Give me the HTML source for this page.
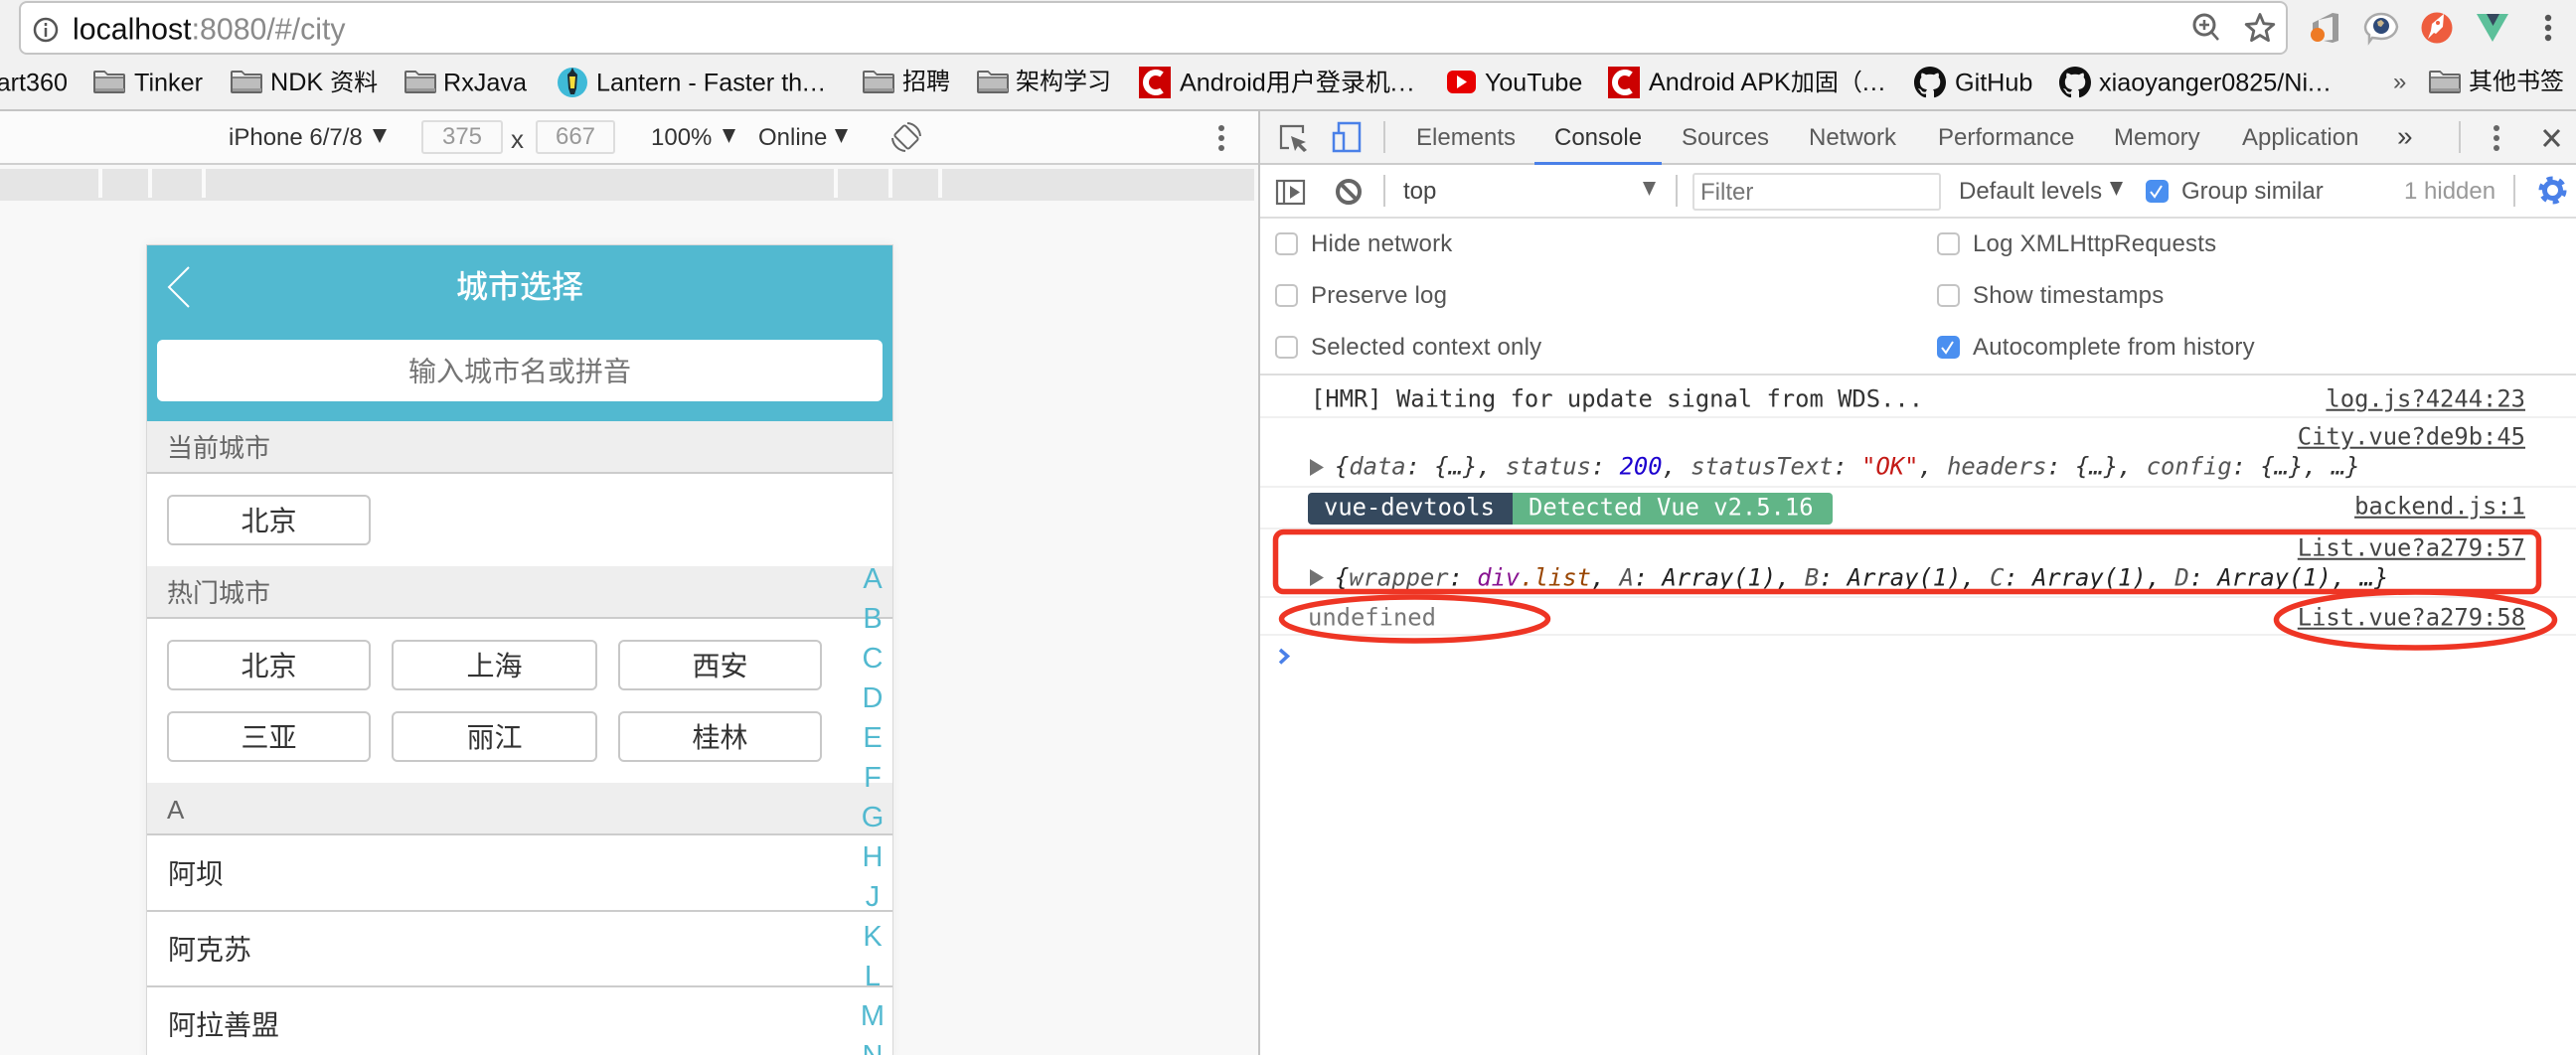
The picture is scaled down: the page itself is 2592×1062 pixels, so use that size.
<!DOCTYPE html>
<html><head><meta charset="utf-8"><style>
html,body{margin:0;padding:0;width:2592px;height:1062px;overflow:hidden;background:#fff}
body{position:relative;font-family:"Liberation Sans","Noto Sans CJK SC",sans-serif;font-size:24px;color:#333}
.t{position:absolute;white-space:nowrap;transform:translateY(calc(-50% + 1.5px));line-height:1.2}
.c{transform:translate(-50%,calc(-50% + 1.5px));text-align:center}
.b{position:absolute}
.m{font-family:"DejaVu Sans Mono","Liberation Mono",monospace;font-size:23.8px;transform:translateY(-50%)}
.lnk{text-decoration:underline;color:#444}
.tab{color:#5a5a5a}
.bm{font-size:25.2px;color:#111}
.z{font-size:24px}
.btn{position:absolute;height:51px;box-sizing:border-box;background:#fff;border:2px solid #c8c8c8;border-radius:6px;font-size:28px;line-height:49px;text-align:center;color:#333}
.sec{position:absolute;left:148px;width:750px;height:53px;box-sizing:border-box;background:#eee;border-bottom:2px solid #ccc;color:#666;font-size:26px;line-height:54px;padding-left:20px}
.row{position:absolute;left:148px;width:750px;height:2px;background:#ccc}
.idx{position:absolute;left:858px;width:40px;text-align:center;color:#52b9d0;font-size:29px;line-height:34px}
.cb{position:absolute;width:23px;height:23px;box-sizing:border-box;border:2px solid #c4c4c4;border-radius:5px;background:#fff}
.on{background:#4a8ff0;border-color:#4a8ff0}
.op{color:#555;letter-spacing:.2px}
</style></head><body>
<!-- chrome -->
<div class="b" style="left:0;top:0;width:2592px;height:112px;background:#f1f1f1;border-bottom:2px solid #c4c4c4;box-sizing:border-box"></div>
<div class="b" style="left:19px;top:1px;width:2283px;height:54px;background:#fff;border:2px solid #c4c4c4;border-radius:8px;box-sizing:border-box"></div>
<div class="t" style="left:73px;top:29px;font-size:30.3px;color:#111">localhost<span style="color:#8a8a8a">:8080/#/city</span></div>
<!-- bookmarks -->
<div class="t bm" style="right:2524px;top:82px">art360</div>
<div class="t bm" style="left:135px;top:82px">Tinker</div>
<div class="t bm" style="left:272px;top:82px">NDK <span class="z">资料</span></div>
<div class="t bm" style="left:446px;top:82px">RxJava</div>
<div class="t bm" style="left:600px;top:82px">Lantern - Faster th<span style="letter-spacing:1px">...</span></div>
<div class="t bm z" style="left:908px;top:82px">招聘</div>
<div class="t bm z" style="left:1022px;top:82px">架构学习</div>
<div class="t bm" style="left:1187px;top:82px">Android<span style="font-size:25px">用户登录机</span><span style="letter-spacing:1.5px">...</span></div>
<div class="t bm" style="left:1494px;top:82px;font-size:25px">YouTube</div>
<div class="t bm" style="left:1659px;top:82px">Android APK<span class="z">加固（</span><span style="letter-spacing:1px">...</span></div>
<div class="t bm" style="left:1967px;top:82px">GitHub</div>
<div class="t bm" style="left:2112px;top:82px">xiaoyanger0825/Ni<span style="letter-spacing:1px">...</span></div>
<div class="t" style="left:2408px;top:82px;color:#555">»</div>
<div class="t bm z" style="left:2484px;top:82px">其他书签</div>
<!-- device toolbar -->
<div class="b" style="left:0;top:112px;width:1266px;height:54px;background:#fbfbfb;border-bottom:2px solid #d0d0d0;box-sizing:border-box"></div>
<div class="b" style="left:0;top:166px;width:1266px;height:896px;background:#f8f8f8"></div>
<div class="b" style="left:0;top:170px;width:1262px;height:32px;background:#e5e5e5"></div>
<div class="b" style="left:99px;top:170px;width:4px;height:29px;background:#fafafa"></div>
<div class="b" style="left:149px;top:170px;width:4px;height:29px;background:#fafafa"></div>
<div class="b" style="left:203px;top:170px;width:4px;height:29px;background:#fafafa"></div>
<div class="b" style="left:839px;top:170px;width:4px;height:29px;background:#fafafa"></div>
<div class="b" style="left:894px;top:170px;width:4px;height:29px;background:#fafafa"></div>
<div class="b" style="left:944px;top:170px;width:4px;height:29px;background:#fafafa"></div>
<div class="t" style="left:230px;top:138px;color:#333">iPhone 6/7/8</div>
<div class="b" style="left:424px;top:121px;width:82px;height:34px;box-sizing:border-box;border:2px solid #ddd;background:#fafafa;border-radius:3px;text-align:center;line-height:30px;color:#999">375</div>
<div class="t" style="left:514px;top:139px;color:#444;font-size:26px">x</div>
<div class="b" style="left:539px;top:121px;width:80px;height:34px;box-sizing:border-box;border:2px solid #ddd;background:#fafafa;border-radius:3px;text-align:center;line-height:30px;color:#999">667</div>
<div class="t" style="left:655px;top:138px">100%</div>
<div class="t" style="left:763px;top:138px">Online</div>
<!-- frame -->
<div class="b" style="left:147px;top:246px;width:752px;height:820px;background:#fff;box-sizing:border-box;border:1px solid #d8d8d8;box-shadow:0 0 10px rgba(0,0,0,.05)"></div>
<div class="b" style="left:148px;top:247px;width:750px;height:177px;background:#52b9d0"></div>
<div class="t c" style="left:523px;top:287px;color:#fff;font-size:32px;font-weight:500">城市选择</div>
<div class="b" style="left:158px;top:342px;width:730px;height:62px;background:#fff;border-radius:6px"></div>
<div class="t c" style="left:523px;top:373px;color:#757575;font-size:28px">输入城市名或拼音</div>
<div class="sec" style="top:424px">当前城市</div>
<div class="btn" style="left:168px;top:498px;width:205px">北京</div>
<div class="sec" style="top:570px">热门城市</div>
<div class="btn" style="left:168px;top:644px;width:205px">北京</div>
<div class="btn" style="left:394px;top:644px;width:207px">上海</div>
<div class="btn" style="left:622px;top:644px;width:205px">西安</div>
<div class="btn" style="left:168px;top:716px;width:205px">三亚</div>
<div class="btn" style="left:394px;top:716px;width:207px">丽江</div>
<div class="btn" style="left:622px;top:716px;width:205px">桂林</div>
<div class="sec" style="top:788px">A</div>
<div class="t" style="left:169px;top:879px;font-size:28px">阿坝</div>
<div class="row" style="top:916px"></div>
<div class="t" style="left:169px;top:955px;font-size:28px">阿克苏</div>
<div class="row" style="top:992px"></div>
<div class="t" style="left:169px;top:1031px;font-size:28px">阿拉善盟</div>
<div class="idx" style="top:566px">A</div><div class="idx" style="top:606px">B</div><div class="idx" style="top:646px">C</div><div class="idx" style="top:686px">D</div><div class="idx" style="top:726px">E</div><div class="idx" style="top:766px">F</div><div class="idx" style="top:806px">G</div><div class="idx" style="top:846px">H</div><div class="idx" style="top:886px">J</div><div class="idx" style="top:926px">K</div><div class="idx" style="top:966px">L</div><div class="idx" style="top:1006px">M</div><div class="idx" style="top:1046px">N</div>
<!-- devtools -->
<div class="b" style="left:1266px;top:112px;width:2px;height:950px;background:#c4c4c4"></div>
<div class="b" style="left:1268px;top:112px;width:1324px;height:54px;background:#f3f3f3;border-bottom:2px solid #ccc;box-sizing:border-box"></div>
<div class="b" style="left:1544px;top:163px;width:128px;height:3px;background:#4a80e8"></div>
<div class="t tab" style="left:1425px;top:138px">Elements</div>
<div class="t" style="left:1564px;top:138px;color:#333">Console</div>
<div class="t tab" style="left:1692px;top:138px">Sources</div>
<div class="t tab" style="left:1820px;top:138px">Network</div>
<div class="t tab" style="left:1950px;top:138px">Performance</div>
<div class="t tab" style="left:2127px;top:138px">Memory</div>
<div class="t tab" style="left:2256px;top:138px">Application</div>
<div class="t tab" style="left:2412px;top:136px;font-size:28px;color:#444">»</div>
<div class="b" style="left:1268px;top:218px;width:1324px;height:2px;background:#ddd"></div>
<div class="t" style="left:1412px;top:192px;color:#444">top</div>
<div class="b" style="left:1703px;top:174px;width:250px;height:38px;box-sizing:border-box;border:2px solid #ddd;border-radius:3px;background:#fff"></div>
<div class="t" style="left:1711px;top:193px;color:#777">Filter</div>
<div class="t" style="left:1971px;top:192px;color:#555">Default levels</div>
<div class="cb on" style="left:2159px;top:181px"></div>
<div class="t" style="left:2195px;top:192px;color:#555">Group similar</div>
<div class="t" style="left:2419px;top:192px;color:#999">1 hidden</div>
<!-- options -->
<div class="cb" style="left:1283px;top:234px"></div><div class="t op" style="left:1319px;top:245px">Hide network</div>
<div class="cb" style="left:1283px;top:286px"></div><div class="t op" style="left:1319px;top:297px">Preserve log</div>
<div class="cb" style="left:1283px;top:338px"></div><div class="t op" style="left:1319px;top:349px">Selected context only</div>
<div class="cb" style="left:1949px;top:234px"></div><div class="t op" style="left:1985px;top:245px">Log XMLHttpRequests</div>
<div class="cb" style="left:1949px;top:286px"></div><div class="t op" style="left:1985px;top:297px">Show timestamps</div>
<div class="cb on" style="left:1949px;top:338px"></div><div class="t op" style="left:1985px;top:349px">Autocomplete from history</div>
<div class="b" style="left:1268px;top:376px;width:1324px;height:2px;background:#ddd"></div>
<!-- console -->
<div class="b" style="left:1268px;top:419px;width:1324px;height:2px;background:#f0f0f0"></div>
<div class="b" style="left:1268px;top:489px;width:1324px;height:2px;background:#f0f0f0"></div>
<div class="b" style="left:1268px;top:531px;width:1324px;height:2px;background:#f0f0f0"></div>
<div class="b" style="left:1268px;top:600px;width:1324px;height:2px;background:#f0f0f0"></div>
<div class="b" style="left:1268px;top:638px;width:1324px;height:2px;background:#f0f0f0"></div>
<div class="t m" style="left:1319px;top:402px;color:#333">[HMR] Waiting for update signal from WDS...</div>
<div class="t m lnk" style="right:51px;top:402px">log.js?4244:23</div>
<div class="t m lnk" style="right:51px;top:440px">City.vue?de9b:45</div>
<div class="t m" style="left:1343px;top:470px;font-style:italic;color:#333">{<span style="color:#565656">data</span>: {…}, <span style="color:#565656">status</span>: <span style="color:#1c00cf">200</span>, <span style="color:#565656">statusText</span>: <span style="color:#c41a16">"OK"</span>, <span style="color:#565656">headers</span>: {…}, <span style="color:#565656">config</span>: {…}, …}</div>
<div class="b" style="left:1316px;top:496px;width:206px;height:32px;background:#35495e;border-radius:4px 0 0 4px"></div>
<div class="b" style="left:1522px;top:496px;width:322px;height:32px;background:#61b587;border-radius:0 4px 4px 0"></div>
<div class="t m" style="left:1332px;top:511px;color:#fff">vue-devtools</div>
<div class="t m" style="left:1538px;top:511px;color:#fff">Detected Vue v2.5.16</div>
<div class="t m lnk" style="right:51px;top:510px">backend.js:1</div>
<div class="t m lnk" style="right:51px;top:552px">List.vue?a279:57</div>
<div class="t m" style="left:1343px;top:582px;font-style:italic;color:#222">{<span style="color:#565656">wrapper</span>: <span style="color:#881391">div</span><span style="color:#994500">.list</span>, <span style="color:#565656">A</span>: Array(1), <span style="color:#565656">B</span>: Array(1), <span style="color:#565656">C</span>: Array(1), <span style="color:#565656">D</span>: Array(1), …}</div>
<div class="t m" style="left:1316px;top:622px;color:#777">undefined</div>
<div class="t m lnk" style="right:51px;top:622px">List.vue?a279:58</div>
<!-- icons & annotations -->
<svg class="b" style="left:0;top:0" width="2592" height="1062" viewBox="0 0 2592 1062" fill="none">
<defs>
<g id="fd"><path d="M1 22V3a1 1 0 0 1 1-1h9l3 3h16a1 1 0 0 1 1 1v16a1 1 0 0 1-1 1H2a1 1 0 0 1-1-1z" fill="#bdbdbd" stroke="#666" stroke-width="2"/><path d="M2 3h9l3 3h16v2H2z" fill="#efefef"/><path d="M2 8h29" stroke="#666" stroke-width="1.500"/><path d="M2 19h29v3H2z" fill="#999"/></g>
<path id="gh" transform="scale(2)" fill="#111" d="M8 0C3.58 0 0 3.58 0 8c0 3.54 2.29 6.53 5.47 7.59.4.07.55-.17.55-.38 0-.19-.01-.82-.01-1.49-2.01.37-2.53-.49-2.69-.94-.09-.23-.48-.94-.82-1.13-.28-.15-.68-.52-.01-.53.63-.01 1.08.58 1.23.82.72 1.21 1.87.87 2.33.66.07-.52.28-.87.51-1.07-1.78-.2-3.64-.89-3.64-3.95 0-.87.31-1.59.82-2.15-.08-.2-.36-1.02.08-2.12 0 0 .67-.21 2.2.82.64-.18 1.32-.27 2-.27.68 0 1.36.09 2 .27 1.53-1.04 2.2-.82 2.2-.82.44 1.1.16 1.92.08 2.12.51.56.82 1.27.82 2.15 0 3.07-1.87 3.75-3.65 3.95.29.25.54.73.54 1.48 0 1.07-.01 1.93-.01 2.2 0 .21.15.46.55.38A8.013 8.013 0 0016 8c0-4.42-3.58-8-8-8z"/>
<g id="cc"><rect width="32" height="32" fill="#c00"/><path d="M23 8a10 10 0 1 0 0 16" stroke="#fff" stroke-width="6"/></g>
</defs>
<!-- address bar icons -->
<circle cx="46" cy="30" r="11" stroke="#555" stroke-width="2.5"/><path d="M46 28v9M46 23v3" stroke="#555" stroke-width="2.5"/>
<circle cx="2218" cy="25" r="10" stroke="#666" stroke-width="3"/><path d="M2225 32l7 8M2218 20v10M2213 25h10" stroke="#666" stroke-width="2.5"/>
<path d="M2274 14.500L2277.800 23.700 2287.800 24.500 2280.200 31 2282.500 40.700 2274 35.500 2265.500 40.700 2267.800 31 2260.200 24.500 2270.200 23.700z" stroke="#666" stroke-width="2.800" stroke-linejoin="round"/>
<!-- extensions -->
<path d="M2327 23L2347 13 2353 14V41L2347 43 2338 41 2347 40V17L2333 20V30H2327z" fill="#9a9a9a"/><circle cx="2332" cy="35" r="7" fill="#ee7a24"/>
<path d="M2396 14c9 0 15 6 16 13-1 7-7 12-16 12l-9-1-3 4 0-7c-3-2-4-5-4-8 1-7 7-13 16-13z" fill="#fff" stroke="#aaa" stroke-width="2.500"/><circle cx="2396" cy="26" r="8" fill="#2f4a78"/><path d="M2392 22l4-2 3 3-3 4-3-1z" fill="#c9b48a"/>
<circle cx="2452" cy="28" r="15.500" fill="#ee5d3e"/><path d="M2443 39l3-8 1-7 12-10-1 13-7 7-2-1z" fill="#fff"/><circle cx="2453" cy="23" r="2" fill="#ee5d3e"/>
<path d="M2492 14h32l-16 28z" fill="#5cc09a"/><path d="M2502 14h13l-6.500 12z" fill="#35495e"/>
<circle cx="2564" cy="18" r="3.200" fill="#555"/><circle cx="2564" cy="28" r="3.200" fill="#555"/><circle cx="2564" cy="38" r="3.200" fill="#555"/>
<!-- bookmark icons -->
<use href="#fd" x="94" y="70"/><use href="#fd" x="232" y="70"/><use href="#fd" x="407" y="70"/><use href="#fd" x="868" y="70"/><use href="#fd" x="983" y="70"/><use href="#fd" x="2444" y="70"/>
<circle cx="576" cy="83" r="15" fill="#3fbad8"/><path d="M576 68l2 4 3 3-1 14-2 6h-4l-2-6-1-14 3-3z" fill="#1b2a33"/><path d="M573 77h6l-1 12h-4z" fill="#f5dc3c"/>
<use href="#cc" x="1146" y="67"/><use href="#cc" x="1618" y="67"/>
<rect x="1456" y="71" width="29" height="23" rx="6" fill="#e80000"/><path d="M1466 76l10 6.500-10 6.500z" fill="#fff"/>
<use href="#gh" x="1926" y="67"/><use href="#gh" x="2072" y="67"/>
<!-- device toolbar icons -->
<path d="M375 130h14l-7 14z" fill="#333"/><path d="M727 130h13l-6.500 14z" fill="#333"/><path d="M840 130h13l-6.500 14z" fill="#333"/>
<rect x="904.500" y="128" width="15" height="20" rx="2" transform="rotate(-45 912 138)" stroke="#666" stroke-width="2"/><path d="M913 124a14 14 0 0 1 13 13M898 139a14 14 0 0 0 13 13" stroke="#666" stroke-width="2"/>
<circle cx="1229" cy="129" r="3" fill="#666"/><circle cx="1229" cy="139" r="3" fill="#666"/><circle cx="1229" cy="149" r="3" fill="#666"/>
<!-- back chevron -->
<path d="M190 269l-20 20 20 20" stroke="#fff" stroke-width="2"/>
<!-- devtools tab icons -->
<path d="M1297 149h-8v-22h22v7" stroke="#666" stroke-width="2.200"/><path d="M1299 137l15 6-5 2 6 6-3 2-6-6-3 5z" fill="#666"/>
<path d="M1347 133V124H1368V152H1342V134H1352V152" stroke="#4a80e8" stroke-width="2.500"/>
<path d="M1393 122v32M2475 122v32M1393 176v32M1687 176v32M2530 176v32" stroke="#ccc" stroke-width="2"/>
<circle cx="2512" cy="129" r="3" fill="#666"/><circle cx="2512" cy="139" r="3" fill="#666"/><circle cx="2512" cy="149" r="3" fill="#666"/>
<path d="M2560 131l15 16M2575 131l-15 16" stroke="#555" stroke-width="3"/>
<!-- console toolbar icons -->
<rect x="1285" y="182" width="27" height="23" stroke="#666" stroke-width="2.200"/><path d="M1292 182v23" stroke="#666" stroke-width="2.200"/><path d="M1298 187l10 6.500-10 6.500z" fill="#666"/>
<circle cx="1357" cy="193" r="11" stroke="#666" stroke-width="4"/><path d="M1349 185l16 16" stroke="#666" stroke-width="4"/>
<path d="M1653 183h13l-6.500 14z" fill="#666"/><path d="M2123 183h13l-6.500 14z" fill="#555"/>
<path d="M2164 193l4 5 7-11" stroke="#fff" stroke-width="2"/><path d="M1954 350l4 5 7-11" stroke="#fff" stroke-width="2"/>
<circle cx="2568.500" cy="191.500" r="8" stroke="#4a80e8" stroke-width="5"/><circle cx="2568.500" cy="191.500" r="12" stroke="#4a80e8" stroke-width="4" stroke-dasharray="6 6.570"/>
<!-- console arrows -->
<path d="M1318 462l14 8.500-14 8.500z" fill="#727272"/><path d="M1318 573l14 8.500-14 8.500z" fill="#727272"/>
<path d="M1288 654l7.500 6.500-7.500 7" stroke="#4a80e8" stroke-width="3.500"/>
<!-- red annotations -->
<rect x="1283.500" y="535.500" width="1271" height="60" rx="8" stroke="#ee3524" stroke-width="5.500"/>
<ellipse cx="1423.500" cy="623" rx="134" ry="22" stroke="#ee3524" stroke-width="5.500"/>
<ellipse cx="2430.500" cy="624" rx="140" ry="28" stroke="#ee3524" stroke-width="5.500"/>
</svg>
</body></html>
